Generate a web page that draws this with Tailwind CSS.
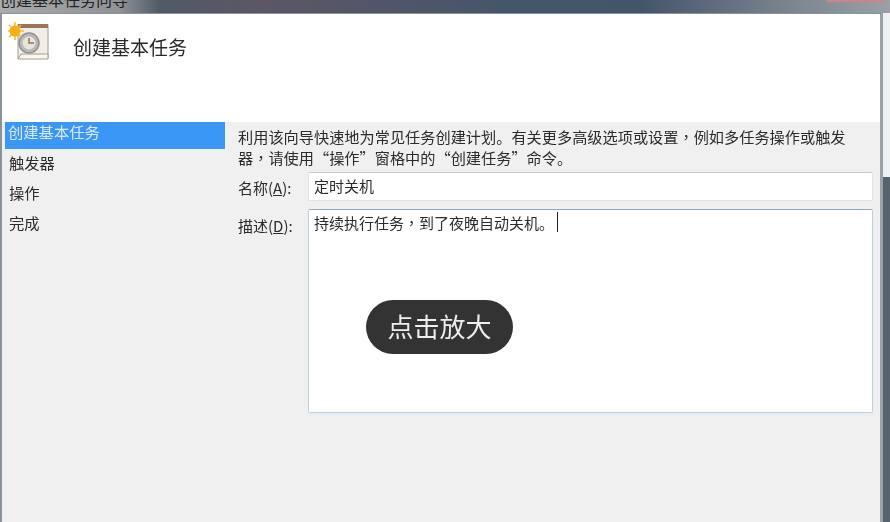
<!DOCTYPE html>
<html lang="zh-CN">
<head>
    <meta charset="UTF-8">
    <title>创建基本任务</title>
    <script src="https://cdn.jsdelivr.net/npm/@tailwindcss/browser@4"></script>
</head>
<body class="w-[890px] h-[522px] overflow-hidden bg-[#f0f0f0] font-['Noto_Sans_CJK_SC','Liberation_Sans',sans-serif] text-[#2b2b2b]">
<div class="relative flex flex-col w-[890px] h-[522px]">
    <div class="flex flex-col flex-1 min-h-0 blur-[0.4px]">
        <!-- 标题栏 -->
        <div class="h-[13px] shrink-0 overflow-hidden bg-[linear-gradient(90deg,#a9abae_0,#8f9296_120px,#4f5a68_160px,#5c5666_260px,#46566a_500px,#44546a_640px,#7b8591_790px,#9aa0a6_890px)] flex justify-between">
            <span class="block text-[16px] leading-[16px] -mt-[9px] text-[#222]">创建基本任务向导</span>
            <span class="block w-[58px] h-[2px] mr-[5px] bg-[#c8858a]"></span>
        </div>
        <div class="flex flex-1 min-h-0">
            <!-- 窗口 -->
            <div class="flex flex-col w-[883px] border-l-2 border-r-[3px] border-t border-[#8b929a] border-r-[#99a1a9] bg-[#f0f0f0]">
                <div class="h-[108px] shrink-0 bg-white flex items-start pl-[6px] pt-[7px]">
                    <svg width="44" height="42" viewBox="0 0 44 42">
                        <rect x="10" y="4" width="30" height="33" fill="#f1eee8" stroke="#a39a8e"/>
                        <rect x="10" y="3" width="30" height="4" fill="#9c7357"/>
                        <path d="M10 38 L13 33 H40 V38 Z" fill="#f8f6f0" stroke="#a89c8c"/>
                        <circle cx="21" cy="22" r="10" fill="#b4b9c2" stroke="#9a9080" stroke-width="1.5"/>
                        <circle cx="21" cy="22" r="6.5" fill="#e9e5da"/>
                        <path d="M21 17 V22 H26" fill="none" stroke="#8a7a50" stroke-width="1.5"/>
                        <path d="M7 1 V19 M-2 10 H16 M1 4 L13 16 M13 4 L1 16" stroke="#f9bf2c" stroke-width="1.6"/>
                        <circle cx="7" cy="10" r="5.5" fill="#f6ad17"/>
                    </svg>
                    <span class="ml-[21px] mt-[14px] text-[19px] leading-[24px] text-[#2a2a2a]">创建基本任务</span>
                </div>
                <div class="flex flex-1 min-h-0 pl-[3px]">
                    <!-- 左侧步骤 -->
                    <ul class="w-[220px] shrink-0 text-[15.3px] leading-[20px]">
                        <li class="h-[27px] bg-[#3a97f5] text-[#dbe9f7] pl-[3px] leading-[18px] -mb-px">创建基本任务</li>
                        <li class="h-[31px] pl-[4px] pt-[4px]">触发器</li>
                        <li class="h-[31px] pl-[4px] pt-[3px]">操作</li>
                        <li class="h-[31px] pl-[4px] pt-[2px]">完成</li>
                    </ul>
                    <!-- 右侧表单 -->
                    <div class="flex-1 pl-[13px] pr-[7px] text-[15.2px] leading-[21px]">
                        <p class="pt-[4px] w-[625px]">利用该向导快速地为常见任务创建计划。有关更多高级选项或设置<span lang="zh-TW" class="font-['Noto_Sans_CJK_TC']">，</span>例如多任务操作或触发器<span lang="zh-TW" class="font-['Noto_Sans_CJK_TC']">，</span>请使用“操作”窗格中的“创建任务”命令。</p>
                        <div class="flex mt-[4px] gap-[14px]">
                            <label class="w-[56px] pt-[5px] text-[15px] whitespace-nowrap">名称(<u>A</u>):</label>
                            <div class="flex-1 h-[29px] bg-white border border-[#dfe3e6] border-t-[#c5cbd0] rounded-[2px] pl-[5px] pt-[2px] text-[15px]">定时关机</div>
                        </div>
                        <div class="flex mt-[8px] gap-[14px]">
                            <label class="w-[56px] pt-[6px] text-[15px] whitespace-nowrap">描述(<u>D</u>):</label>
                            <div class="flex-1 h-[204px] bg-white border border-[#c3d0da] border-t-[#93a8b8] rounded-[2px] pl-[5px] pt-[2px] text-[15px] shadow-[0_2px_3px_#e4edf5]">持续执行任务<span lang="zh-TW" class="font-['Noto_Sans_CJK_TC']">，</span>到了夜晚自动关机。<span class="inline-block w-px h-[20px] ml-[3px] align-top bg-[#222]"></span></div>
                        </div>
                    </div>
                </div>
            </div>
            <!-- 右侧露出的背景 -->
            <div class="flex-1 flex flex-col">
                <div class="h-[164px] bg-[#eef0f2]"></div>
                <div class="flex-1 bg-[#55626f]"></div>
            </div>
        </div>
    </div>
    <!-- 放大提示 -->
    <div class="absolute left-[366px] top-[300px] w-[147px] h-[54px] rounded-full bg-[#333] text-[#eee] text-[26px] pb-[3px] flex items-center justify-center">点击放大</div>
</div>
</body>
</html>
